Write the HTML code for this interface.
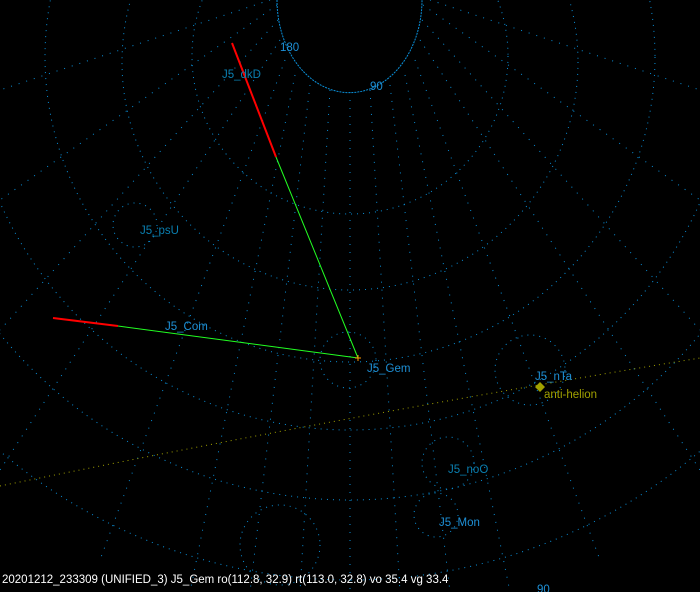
<!DOCTYPE html><html><head><style>
body{margin:0;background:#000;width:700px;height:592px;overflow:hidden;font-family:"Liberation Sans",sans-serif}
svg{position:absolute;left:0;top:0}
.t{font-size:11.5px;fill:#1e90d6}
</style></head><body>
<svg width="700" height="592" viewBox="0 0 700 592">
<g fill="none" stroke="#0a8fd8" stroke-width="1" stroke-dasharray="1 5">
<circle cx="350" cy="56" r="158"/>
<circle cx="350" cy="62" r="228"/>
<circle cx="350" cy="57" r="305"/>
<circle cx="350" cy="47" r="383"/>
<circle cx="350" cy="48" r="452"/>
<circle cx="350" cy="40" r="540"/>
<g stroke-dasharray="1 7">
<line x1="350" y1="92" x2="350" y2="592"/>
<line x1="330" y1="90" x2="300" y2="592"/>
<line x1="310" y1="85" x2="250" y2="592"/>
<line x1="295" y1="75" x2="190" y2="592"/>
<line x1="285" y1="60" x2="100" y2="560"/>
<line x1="280" y1="40" x2="0" y2="470"/>
<line x1="278" y1="20" x2="0" y2="330"/>
<line x1="277" y1="5" x2="0" y2="200"/>
<line x1="270" y1="0" x2="0" y2="90"/>
<line x1="370" y1="90" x2="400" y2="592"/>
<line x1="390" y1="85" x2="450" y2="592"/>
<line x1="405" y1="75" x2="510" y2="592"/>
<line x1="415" y1="60" x2="600" y2="560"/>
<line x1="420" y1="40" x2="700" y2="470"/>
<line x1="422" y1="20" x2="700" y2="330"/>
<line x1="423" y1="5" x2="700" y2="200"/>
<line x1="430" y1="0" x2="700" y2="90"/>
</g>
<circle cx="135" cy="225" r="22"/>
<circle cx="348" cy="360" r="28"/>
<circle cx="530" cy="370" r="35"/>
<circle cx="448" cy="463" r="26"/>
<circle cx="436" cy="515" r="22"/>
<circle cx="280" cy="545" r="40"/>
</g>
<path d="M277 0 A72 92 0 0 0 422 0" fill="none" stroke="#0a8fd8" stroke-dasharray="2 1"/>
<path d="M0 486 Q350 415 700 358" fill="none" stroke="#a0a000" stroke-dasharray="1 4"/>
<line x1="232" y1="43" x2="276" y2="157" stroke="#f00" stroke-width="2"/>
<line x1="276" y1="157" x2="358" y2="358" stroke="#2f2" stroke-width="1"/>
<line x1="53" y1="318" x2="118" y2="326" stroke="#f00" stroke-width="2"/>
<line x1="118" y1="326" x2="358" y2="358" stroke="#2f2" stroke-width="1"/>
<path d="M355 358h6M358 355v6" stroke="#f90"/>
<path d="M540 382l5 5-5 5-5-5z" fill="#a0a000"/>
<text class="t" x="280" y="51">180</text>
<text class="t" x="370" y="90">90</text>
<text class="t" x="222" y="78" style="fill:#0a7fb0">J5_dkD</text>
<text class="t" x="140" y="234" style="fill:#0a7fb0">J5_psU</text>
<text class="t" x="165" y="330">J5_Com</text>
<text class="t" x="367" y="372">J5_Gem</text>
<text class="t" x="535" y="380">J5_nTa</text>
<text class="t" x="544" y="398" style="fill:#a0a000">anti-helion</text>
<text class="t" x="448" y="473" style="fill:#0a7fb0">J5_noO</text>
<text class="t" x="439" y="526">J5_Mon</text>
<text class="t" x="537" y="593">90</text>
<text x="2" y="583" style="font-size:11.5px;fill:#fff">20201212_233309 (UNIFIED_3) J5_Gem ro(112.8, 32.9) rt(113.0, 32.8) vo 35.4 vg 33.4</text>
</svg>
</body></html>
